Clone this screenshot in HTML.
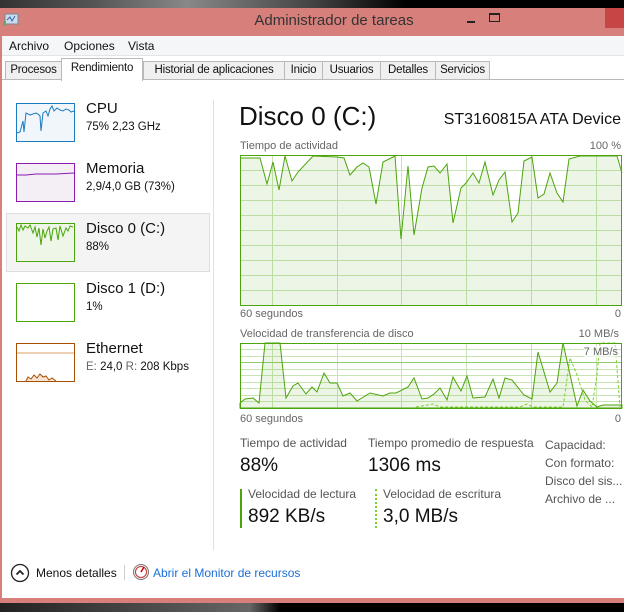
<!DOCTYPE html>
<html><head><meta charset="utf-8"><style>
*{margin:0;padding:0;box-sizing:border-box}
body{width:624px;height:612px;overflow:hidden;background:#111;font-family:"Liberation Sans",sans-serif;position:relative}
.a{position:absolute;white-space:nowrap}
.g{color:#666;font-size:11px}
.t{position:absolute;top:61px;height:19px;border:1px solid #b9b9b9;background:#f0f0f0;font-size:11.5px;color:#111;text-align:center;padding-top:2px;overflow:hidden;white-space:nowrap;letter-spacing:-0.2px}
</style></head><body>
<div class="a" style="left:0;top:0;width:624px;height:8px;background:linear-gradient(90deg,#333 0,#555 15%,#888 30%,#444 50%,#000 65%,#000 100%)"></div>
<div class="a" style="left:0;top:8px;width:624px;height:595px;background:#d77f7a"></div>
<div class="a" style="left:605px;top:8px;width:19px;height:20px;background:#c74545"></div>
<div class="a" style="left:204px;top:12px;width:260px;text-align:center;font-size:15px;color:#333">Administrador de tareas</div>
<div class="a" style="left:467px;top:21px;width:8px;height:2px;background:#222"></div>
<div class="a" style="left:489px;top:13px;width:11px;height:9px;border:1px solid #222;border-top-width:2px"></div>
<svg class="a" style="left:3px;top:13px" width="16" height="14"><rect x="2" y="1" width="13" height="10" fill="#cde" stroke="#789"/><polyline points="4,7 7,4 9,8 12,3" fill="none" stroke="#36a"/><rect x="0" y="8" width="3" height="5" fill="#6a6"/></svg>
<div class="a" style="left:2px;top:36px;width:622px;height:562px;background:#fff"></div>
<div class="a" style="left:2px;top:36px;width:622px;height:20px;background:#f5f6f7;border-bottom:1px solid #e4e4e4"></div>
<div class="a" style="left:9px;top:39px;font-size:12px;color:#111">Archivo</div>
<div class="a" style="left:64px;top:39px;font-size:12px;color:#111">Opciones</div>
<div class="a" style="left:128px;top:39px;font-size:12px;color:#111">Vista</div>
<div class="a" style="left:2px;top:56px;width:622px;height:24px;background:#fff;border-bottom:1px solid #b9b9b9"></div>
<div class="t" style="left:5px;width:57px">Procesos</div>
<div class="t" style="left:61px;width:82px;top:58px;height:23px;background:#fff;border-bottom:none;padding-top:3px">Rendimiento</div>
<div class="t" style="left:143px;width:142px">Historial de aplicaciones</div>
<div class="t" style="left:284px;width:39px">Inicio</div>
<div class="t" style="left:322px;width:59px">Usuarios</div>
<div class="t" style="left:380px;width:56px">Detalles</div>
<div class="t" style="left:435px;width:55px">Servicios</div>
<div class="a" style="left:6px;top:213px;width:204px;height:59px;background:#f4f4f4;border:1px solid #ddd"></div>
<div class="a" style="left:213px;top:100px;width:1px;height:450px;background:#e0e0e0"></div>
<svg class="a" style="left:16px;top:103px" width="60" height="280">
<rect x="0.5" y="0.5" width="58" height="38" fill="#f1f6fa" stroke="#1b7bbf"/>
<polyline points="1,30 4,29 7,18 8,29 10,10 14,12 17,11 20,10 22,11 24,13 25,28 27,10 30,8 32,13 34,6 36,3 38,8 41,5 44,7 47,8 50,6 53,7 55,9 58,8" fill="none" stroke="#1b7bbf"/>
<rect x="0.5" y="60.5" width="58" height="38" fill="#f3eff4" stroke="#8b1bb1"/>
<polyline points="1,72 10,72 20,71 40,71 58,70" fill="none" stroke="#8b1bb1"/>
<rect x="0.5" y="120.5" width="58" height="38" fill="#eef6e8" stroke="#4ca40c"/>
<polyline points="1,124 3,128 5,122 7,127 9,123 12,125 14,122 17,130 19,124 21,134 23,125 25,142 27,126 29,135 31,128 33,124 35,138 37,126 40,125 42,137 44,123 47,133 50,125 52,128 54,123 57,124" fill="none" stroke="#4ca40c"/>
<rect x="0.5" y="180.5" width="58" height="38" fill="#fff" stroke="#4ca40c"/>
<rect x="0.5" y="240.5" width="58" height="38" fill="#fff" stroke="#a74f01"/>
<line x1="1" y1="250" x2="58" y2="250" stroke="#d8a06a"/>
<polyline points="10,278 12,274 15,276 18,272 21,275 24,271 27,274 30,273 33,277 36,275 40,278" fill="#f7e3d0" stroke="#a74f01"/>
</svg>
<div class="a" style="left:86px;top:100px;font-size:15px;color:#111">CPU</div>
<div class="a" style="left:86px;top:121px;font-size:11.5px;color:#111">75% 2,23 GHz</div>
<div class="a" style="left:86px;top:160px;font-size:15px;color:#111">Memoria</div>
<div class="a" style="left:86px;top:181px;font-size:11.5px;color:#111">2,9/4,0 GB (73%)</div>
<div class="a" style="left:86px;top:220px;font-size:15px;color:#111">Disco 0 (C:)</div>
<div class="a" style="left:86px;top:241px;font-size:11.5px;color:#111">88%</div>
<div class="a" style="left:86px;top:280px;font-size:15px;color:#111">Disco 1 (D:)</div>
<div class="a" style="left:86px;top:301px;font-size:11.5px;color:#111">1%</div>
<div class="a" style="left:86px;top:340px;font-size:15px;color:#111">Ethernet</div>
<div class="a" style="left:86px;top:361px;font-size:11.5px;color:#111"><span style="color:#666">E:</span> 24,0 <span style="color:#666">R:</span> 208 Kbps</div>
<div class="a" style="left:239px;top:101px;font-size:26px;color:#111">Disco 0 (C:)</div>
<div class="a" style="right:3px;top:111px;font-size:16px;color:#111">ST3160815A ATA Device</div>
<div class="a g" style="left:240px;top:140px">Tiempo de actividad</div>
<div class="a g" style="right:3px;top:140px">100 %</div>
<div class="a g" style="left:240px;top:308px">60 segundos</div>
<div class="a g" style="right:3px;top:308px">0</div>
<div class="a g" style="left:240px;top:328px">Velocidad de transferencia de disco</div>
<div class="a g" style="right:5px;top:328px">10 MB/s</div>
<div class="a g" style="left:240px;top:413px">60 segundos</div>
<div class="a g" style="right:3px;top:413px">0</div>
<svg class="a" style="left:0;top:0" width="624" height="420">
<g stroke="#c8e4b4" stroke-width="1">
<line x1="240" y1="170.5" x2="622" y2="170.5"/><line x1="240" y1="185.5" x2="622" y2="185.5"/><line x1="240" y1="200.5" x2="622" y2="200.5"/><line x1="240" y1="215.5" x2="622" y2="215.5"/><line x1="240" y1="230.5" x2="622" y2="230.5"/><line x1="240" y1="245.5" x2="622" y2="245.5"/><line x1="240" y1="260.5" x2="622" y2="260.5"/><line x1="240" y1="275.5" x2="622" y2="275.5"/><line x1="240" y1="290.5" x2="622" y2="290.5"/>
<line x1="272.5" y1="155" x2="272.5" y2="305"/><line x1="337.5" y1="155" x2="337.5" y2="305"/><line x1="401.5" y1="155" x2="401.5" y2="305"/><line x1="466.5" y1="155" x2="466.5" y2="305"/><line x1="531.5" y1="155" x2="531.5" y2="305"/><line x1="596.5" y1="155" x2="596.5" y2="305"/>
<line x1="240" y1="349.5" x2="622" y2="349.5"/><line x1="240" y1="356.5" x2="622" y2="356.5"/><line x1="240" y1="369.5" x2="622" y2="369.5"/><line x1="240" y1="375.5" x2="622" y2="375.5"/><line x1="240" y1="382.5" x2="622" y2="382.5"/><line x1="240" y1="388.5" x2="622" y2="388.5"/><line x1="240" y1="395.5" x2="622" y2="395.5"/><line x1="240" y1="401.5" x2="622" y2="401.5"/>
<line x1="272.5" y1="343" x2="272.5" y2="408"/><line x1="337.5" y1="343" x2="337.5" y2="408"/><line x1="401.5" y1="343" x2="401.5" y2="408"/><line x1="466.5" y1="343" x2="466.5" y2="408"/><line x1="531.5" y1="343" x2="531.5" y2="408"/><line x1="596.5" y1="343" x2="596.5" y2="408"/>
</g>
<line x1="240" y1="362.5" x2="622" y2="362.5" stroke="#8fcc70"/>
<polygon points="240,305 240,158 260,158 267,184 273,162 279,190 285,156 292,181 298,172 313,156 337,157 344,158 350,175 357,167 363,163 369,167 376,204 383,162 395,156 401,239 408,166 414,235 422,188 428,167 434,166 440,173 447,164 453,223 461,188 466,183 473,173 479,183 485,162 493,195 499,180 505,172 512,222 518,213 524,161 532,157 538,198 544,194 550,173 557,193 563,202 569,159 580,156 617,156 622,173 622,305" fill="rgba(76,164,12,0.1)" stroke="none"/>
<polyline points="240,158 260,158 267,184 273,162 279,190 285,156 292,181 298,172 313,156 337,157 344,158 350,175 357,167 363,163 369,167 376,204 383,162 395,156 401,239 408,166 414,235 422,188 428,167 434,166 440,173 447,164 453,223 461,188 466,183 473,173 479,183 485,162 493,195 499,180 505,172 512,222 518,213 524,161 532,157 538,198 544,194 550,173 557,193 563,202 569,159 580,156 617,156 622,173" fill="none" stroke="#4ca40c"/>
<rect x="240.5" y="155.5" width="381" height="150" fill="none" stroke="#4ca40c"/>
<polygon points="240,408 240,403 245,399 253,398 259,403 265,343 280,343 286,398 293,386 298,383 306,394 312,387 317,392 324,373 330,383 337,383 343,396 350,393 357,401 370,393 383,396 390,393 396,393 408,387 414,378 422,399 428,398 434,394 440,388 447,400 453,377 461,391 467,376 473,398 485,397 493,379 499,398 505,378 512,380 524,395 532,399 538,352 550,392 557,383 563,343 577,406 583,390 590,401 597,407 603,405 622,405 622,408" fill="rgba(76,164,12,0.1)" stroke="#4ca40c"/>
<polyline points="416,407 433,404 440,407 520,407 527,404 533,407 563,407 570,358 577,375 585,400 592,407 597,375 600,343 615,343 620,407" fill="none" stroke="#7ad02a" stroke-dasharray="3,2"/>
<rect x="240.5" y="343.5" width="381" height="65" fill="none" stroke="#4ca40c"/>
</svg>
<div class="a" style="right:6px;top:346px;font-size:11px;color:#666;background:rgba(255,255,255,.6)">7 MB/s</div>
<div class="a" style="left:240px;top:436px;font-size:12px;color:#555">Tiempo de actividad</div>
<div class="a" style="left:240px;top:455px;font-size:19px;color:#111">88%</div>
<div class="a" style="left:368px;top:436px;font-size:12px;color:#555">Tiempo promedio de respuesta</div>
<div class="a" style="left:368px;top:455px;font-size:19px;color:#111">1306 ms</div>
<div class="a" style="left:240px;top:489px;width:2px;height:39px;background:#4ca40c"></div>
<div class="a" style="left:375px;top:489px;width:0;height:39px;border-left:2px dotted #7ad02a"></div>
<div class="a" style="left:248px;top:487px;font-size:12px;color:#555">Velocidad de lectura</div>
<div class="a" style="left:248px;top:506px;font-size:19px;color:#111">892 KB/s</div>
<div class="a" style="left:383px;top:487px;font-size:12px;color:#555">Velocidad de escritura</div>
<div class="a" style="left:383px;top:506px;font-size:19px;color:#111">3,0 MB/s</div>
<div class="a" style="left:545px;top:436px;font-size:12px;color:#555;line-height:18px">Capacidad:<br>Con formato:<br>Disco del sis...<br>Archivo de ...</div>
<svg class="a" style="left:10px;top:563px" width="20" height="20"><circle cx="10" cy="10" r="8.5" fill="none" stroke="#222" stroke-width="1.3"/><polyline points="6.5,11.5 10,8 13.5,11.5" fill="none" stroke="#222" stroke-width="1.8"/></svg>
<div class="a" style="left:36px;top:566px;font-size:12px;color:#111">Menos detalles</div>
<div class="a" style="left:124px;top:565px;width:1px;height:15px;background:#ccc"></div>
<svg class="a" style="left:132px;top:563px" width="18" height="18"><circle cx="9" cy="9" r="7.5" fill="#eee" stroke="#777"/><circle cx="9" cy="9" r="5.5" fill="#fff" stroke="#c33"/><line x1="9" y1="9" x2="12" y2="4" stroke="#c00" stroke-width="1.5"/></svg>
<div class="a" style="left:153px;top:566px;font-size:12px;color:#1a6fd8">Abrir el Monitor de recursos</div>
<div class="a" style="left:0;top:603px;width:624px;height:9px;background:linear-gradient(90deg,#222,#444 20%,#666 40%,#000 45%,#000)"></div>
</body></html>
